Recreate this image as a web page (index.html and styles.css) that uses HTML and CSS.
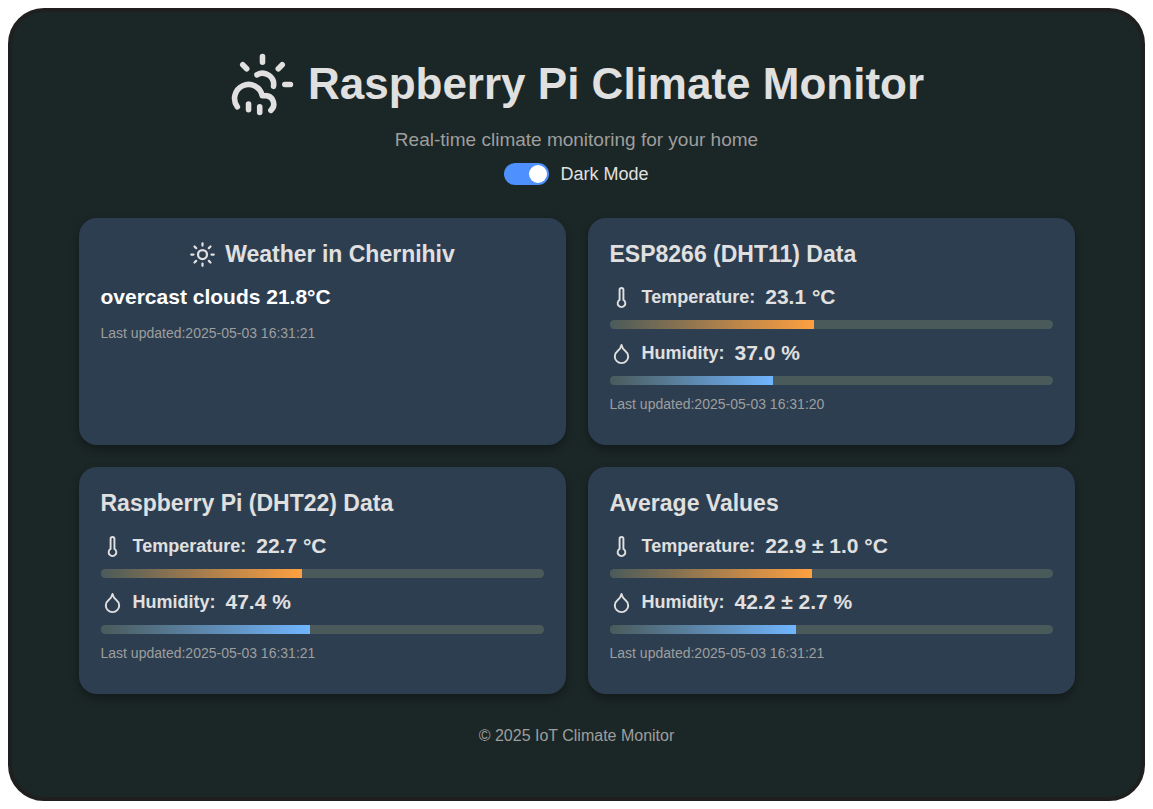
FILE: index.html
```html
<!DOCTYPE html>
<html lang="en">
<head>
<meta charset="utf-8">
<meta name="viewport" content="width=device-width, initial-scale=1">
<title>Raspberry Pi Climate Monitor</title>
<link rel="stylesheet" href="styles.css">
</head>
<body>
<svg class="sprite" aria-hidden="true">
  <symbol id="thermometer" viewBox="0 0 24 24"><path d="M14 4v10.54a4 4 0 1 1-4 0V4a2 2 0 0 1 4 0Z"/></symbol>
  <symbol id="droplet" viewBox="0 0 24 24"><path d="M12 22a7 7 0 0 0 7-7c0-2-1-3.9-3-5.5s-3.5-4-4-6.5c-.5 2.5-2 4.9-4 6.5C6 11.1 5 13 5 15a7 7 0 0 0 7 7z"/></symbol>
</svg>
<div class="app">
  <header class="header">
    <h1 class="title">
      <svg class="icon icon-logo" viewBox="0 0 24 24" aria-hidden="true"><path d="M12 2v2M4.93 4.93l1.41 1.41M20 12h2M19.07 4.93l-1.41 1.41M15.947 12.65a4 4 0 0 0-5.925-4.128M3 20a5 5 0 1 1 8.9-4H13a3 3 0 0 1 2 5.24M11 20v2M7 19v2"/></svg>
      <span>Raspberry Pi Climate Monitor</span>
    </h1>
    <p class="subtitle">Real-time climate monitoring for your home</p>
    <label class="theme" for="dark-mode">
      <input class="switch" type="checkbox" role="switch" id="dark-mode" checked>
      <span>Dark Mode</span>
    </label>
  </header>

  <main class="grid">
    <section class="card">
      <h2 class="card-title card-title-center">
        <svg class="icon icon-sun" viewBox="0 0 24 24" aria-hidden="true"><circle cx="12" cy="12" r="4"/><path d="M12 2v2M12 20v2M4.93 4.93l1.41 1.41M17.66 17.66l1.41 1.41M2 12h2M20 12h2M6.34 17.66l-1.41 1.41M19.07 4.93l-1.41 1.41"/></svg>
        <span>Weather in Chernihiv</span>
      </h2>
      <p class="weather">overcast clouds 21.8°C</p>
      <p class="updated">Last updated:2025-05-03 16:31:21</p>
    </section>

    <section class="card">
      <h2 class="card-title">ESP8266 (DHT11) Data</h2>
      <div class="reading">
        <svg class="icon icon-small" aria-hidden="true"><use href="#thermometer"/></svg>
        <span class="label">Temperature:</span>
        <span class="value">23.1 °C</span>
      </div>
      <div class="bar"><div class="fill fill-temp" style="width:46.2%"></div></div>
      <div class="reading">
        <svg class="icon icon-small" aria-hidden="true"><use href="#droplet"/></svg>
        <span class="label">Humidity:</span>
        <span class="value">37.0 %</span>
      </div>
      <div class="bar"><div class="fill fill-hum" style="width:37%"></div></div>
      <p class="updated">Last updated:2025-05-03 16:31:20</p>
    </section>

    <section class="card">
      <h2 class="card-title">Raspberry Pi (DHT22) Data</h2>
      <div class="reading">
        <svg class="icon icon-small" aria-hidden="true"><use href="#thermometer"/></svg>
        <span class="label">Temperature:</span>
        <span class="value">22.7 °C</span>
      </div>
      <div class="bar"><div class="fill fill-temp" style="width:45.4%"></div></div>
      <div class="reading">
        <svg class="icon icon-small" aria-hidden="true"><use href="#droplet"/></svg>
        <span class="label">Humidity:</span>
        <span class="value">47.4 %</span>
      </div>
      <div class="bar"><div class="fill fill-hum" style="width:47.4%"></div></div>
      <p class="updated">Last updated:2025-05-03 16:31:21</p>
    </section>

    <section class="card">
      <h2 class="card-title">Average Values</h2>
      <div class="reading">
        <svg class="icon icon-small" aria-hidden="true"><use href="#thermometer"/></svg>
        <span class="label">Temperature:</span>
        <span class="value">22.9 ± 1.0 °C</span>
      </div>
      <div class="bar"><div class="fill fill-temp" style="width:45.8%"></div></div>
      <div class="reading">
        <svg class="icon icon-small" aria-hidden="true"><use href="#droplet"/></svg>
        <span class="label">Humidity:</span>
        <span class="value">42.2 ± 2.7 %</span>
      </div>
      <div class="bar"><div class="fill fill-hum" style="width:42.2%"></div></div>
      <p class="updated">Last updated:2025-05-03 16:31:21</p>
    </section>
  </main>

  <footer class="footer">© 2025 IoT Climate Monitor</footer>
</div>
</body>
</html>
```
FILE: styles.css
```css
* { box-sizing: border-box; }

body {
  margin: 0;
  padding: 8px;
  min-height: 100vh;
  display: flex;
  background: #fff;
  color: #e0e0e0;
  font-family: "Liberation Sans", Arial, sans-serif;
}

h1, h2, p { margin: 0; }

.sprite { position: absolute; width: 0; height: 0; }

.app {
  flex: 1;
  display: flex;
  flex-direction: column;
  align-items: center;
  padding: 38px 24px;
  background: #1b2626;
  border: 4px solid #201f1f;
  border-radius: 36px;
}

.icon {
  flex: none;
  fill: none;
  stroke: currentColor;
  stroke-width: 2;
  stroke-linecap: round;
  stroke-linejoin: round;
}
.icon-logo { width: 67px; height: 67px; }
.icon-sun { width: 27px; height: 27px; }
.icon-small { width: 23px; height: 23px; }

.header {
  display: flex;
  flex-direction: column;
  align-items: center;
}

.title {
  display: flex;
  align-items: center;
  gap: 12px;
  font-size: 44px;
  line-height: 68px;
}

.subtitle {
  margin-top: 8px;
  color: #9e9e9e;
  font-size: 19px;
  line-height: 28px;
}

.theme {
  display: flex;
  align-items: center;
  gap: 11px;
  margin-top: 8px;
  font-size: 18px;
  line-height: 24px;
}

.switch {
  appearance: none;
  display: flex;
  align-items: center;
  justify-content: flex-end;
  width: 45px;
  height: 22px;
  margin: 0;
  padding: 2px;
  border-radius: 11px;
  background: #4d90fe;
}
.switch::before {
  content: "";
  width: 18px;
  height: 18px;
  border-radius: 50%;
  background: #fff;
}
.switch:not(:checked) {
  justify-content: flex-start;
  background: #777;
}

.grid {
  display: grid;
  grid-template-columns: repeat(2, minmax(0, 1fr));
  gap: 22px;
  width: 100%;
  max-width: 996px;
  margin-top: 32px;
}

.card {
  padding: 22px 22px 31px;
  border-radius: 18px;
  background: #2d3e50;
  box-shadow: 0 4px 9px rgba(0, 0, 0, 0.3);
}

.card-title {
  margin-bottom: 15px;
  font-size: 23px;
  line-height: 28px;
}
.card-title-center {
  display: flex;
  align-items: center;
  justify-content: center;
  gap: 9px;
}

.weather {
  color: #fff;
  font-size: 21px;
  font-weight: bold;
  line-height: 28px;
}
.weather + .updated { margin-top: 12px; }

.reading {
  display: flex;
  align-items: center;
  height: 28px;
}
.label {
  margin-left: 9px;
  font-size: 18px;
  font-weight: bold;
}
.value {
  margin-left: 10px;
  font-size: 21px;
  font-weight: bold;
}

.bar {
  height: 9px;
  margin: 9px 0 10px;
  overflow: hidden;
  border-radius: 5px;
  background: #4a5a5a;
}
.bar:has(+ .updated) { margin-bottom: 9px; }
.fill { height: 100%; }
.fill-temp { background: linear-gradient(90deg, #4a5a5a, #ffa040); }
.fill-hum { background: linear-gradient(90deg, #4a5a5a, #70b5ff); }

.updated {
  color: #9e9e9e;
  font-size: 14px;
  line-height: 20px;
}

.footer {
  margin-top: 32px;
  color: #9e9e9e;
  font-size: 16px;
  line-height: 20px;
}
```
